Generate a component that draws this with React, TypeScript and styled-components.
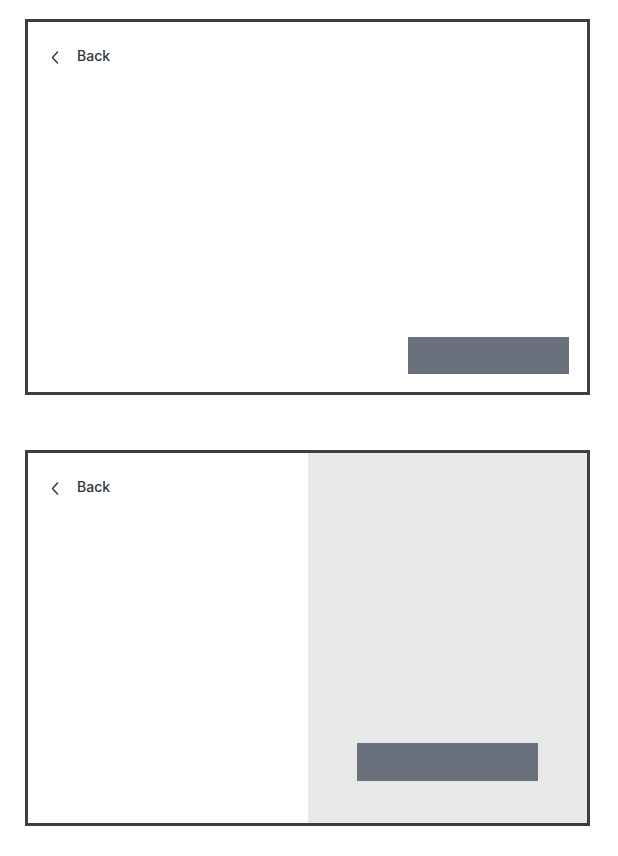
import React from 'react';
import styled, { createGlobalStyle } from 'styled-components';

const GlobalStyle = createGlobalStyle`
  body {
    margin: 0;
    background: #ffffff;
    font-family: Inter, "Noto Sans", sans-serif;
  }
`;

const Page = styled.div`
  display: flex;
  flex-direction: column;
  gap: 55px;
  padding: 19px 29px 30px 25px;
`;

const Frame = styled.div`
  display: flex;
  width: 565px;
  height: 376px;
  box-sizing: border-box;
  border: 3px solid #3b4046;
  background: #ffffff;
`;

const Pane = styled.div<{ $shaded?: boolean }>`
  flex: 1;
  display: flex;
  flex-direction: column;
  background: ${({ $shaded }) => ($shaded ? '#e8e8e8' : '#ffffff')};
`;

const Header = styled.div`
  display: flex;
  align-items: center;
  gap: 18px;
  padding: 24px 0 0 23px;
`;

const ChevronIcon = styled.svg`
  margin-top: 3px;
  flex-shrink: 0;
`;

const BackLink = styled.span`
  font-size: 14px;
  line-height: 20px;
  font-weight: 500;
  color: #2f353b;
`;

const Footer = styled.div<{ $center?: boolean; $bottom: number }>`
  margin-top: auto;
  display: flex;
  justify-content: ${({ $center }) => ($center ? 'center' : 'flex-end')};
  padding: 0 ${({ $center }) => ($center ? '0' : '18px')} ${({ $bottom }) => $bottom}px 0;
`;

const Action = styled.div<{ $wide?: boolean }>`
  width: ${({ $wide }) => ($wide ? '181px' : '161px')};
  height: ${({ $wide }) => ($wide ? '38px' : '37px')};
  background: #6b717c;
`;

const Chevron = () => (
  <ChevronIcon width="8" height="13" viewBox="0 0 8 13" fill="none">
    <path d="M6.5 1L1.5 6.5L6.5 12" stroke="#2f353b" strokeWidth="1.4" strokeLinecap="round" strokeLinejoin="round" />
  </ChevronIcon>
);

const Back = () => (
  <Header>
    <Chevron />
    <BackLink>Back</BackLink>
  </Header>
);

const App: React.FC = () => {
  return (
    <>
      <GlobalStyle />
      <Page>
        <Frame>
          <Pane>
            <Back />
            <Footer $bottom={18}>
              <Action />
            </Footer>
          </Pane>
        </Frame>
        <Frame>
          <Pane>
            <Back />
          </Pane>
          <Pane $shaded>
            <Footer $center $bottom={42}>
              <Action $wide />
            </Footer>
          </Pane>
        </Frame>
      </Page>
    </>
  );
};

export default App;
